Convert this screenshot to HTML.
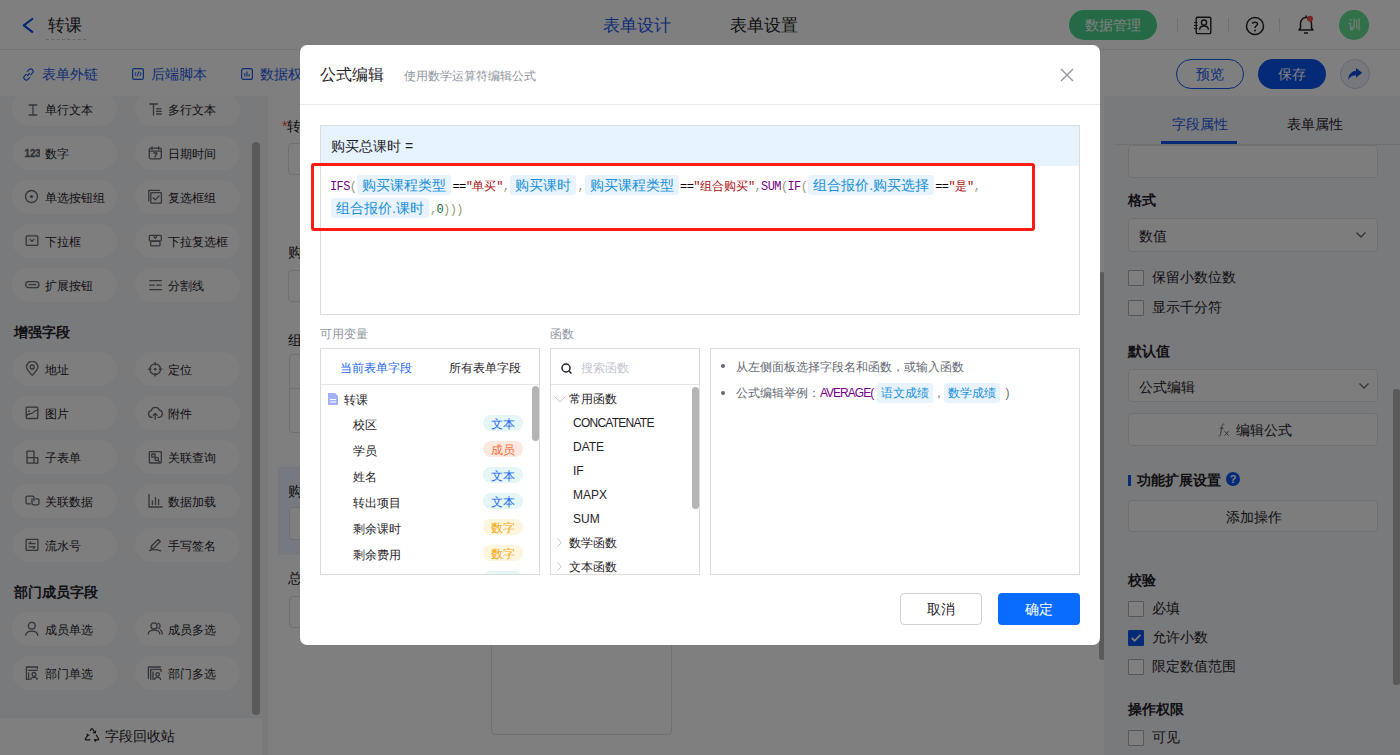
<!DOCTYPE html>
<html><head><meta charset="utf-8">
<style>
*{box-sizing:border-box;margin:0;padding:0}
html,body{width:1400px;height:755px;overflow:hidden;background:#fff;font-family:"Liberation Sans",sans-serif;color:#1f2329}
.a{position:absolute}
.t{position:absolute;white-space:nowrap;line-height:1}
#page{position:absolute;left:0;top:0;width:1400px;height:755px;background:#fff}
#mask{position:absolute;left:0;top:0;width:1400px;height:755px;background:rgba(0,0,0,.5)}
/* left panel */
#left{position:absolute;left:0;top:96px;width:268px;height:659px;background:#f3f4f8;overflow:hidden}
.pill{position:absolute;width:105px;height:34px;border-radius:17px;background:#fcfcfd}
.pill .ic{position:absolute;left:12px;top:9px;width:16px;height:16px}
.pill .lb{position:absolute;left:33px;top:12px;font-size:12px;line-height:12px;color:#1f2329;white-space:nowrap}
.sec{position:absolute;left:14px;font-size:14px;font-weight:bold;line-height:14px;color:#1f2329}
/* modal */
#modal{position:absolute;left:300px;top:45px;width:800px;height:600px;background:#fff;border-radius:7px}
.box{position:absolute;border:1px solid #dcdcdc;background:#fff}
.chip{display:inline-block;margin:0 1px;background:#e8f3fd;color:#1890d8;border-radius:3px;padding:0 5px;height:20px;line-height:20px;font-size:14px;font-family:"Liberation Sans",sans-serif;vertical-align:top}
.cm{font-family:"Liberation Mono",monospace;font-size:12px;letter-spacing:-0.6px}
.fl{position:absolute;height:20px;display:flex;align-items:baseline;white-space:nowrap}
.cj{font-size:12px}
.dchip{display:inline-block;background:#e8f3fd;color:#1890d8;padding:0 4px;border-radius:3px;height:20px;line-height:20px}
.kw{color:#708}.br{color:#997}.st{color:#a11}.nu{color:#164}.op{color:#000}
.tag{position:absolute;left:162px;width:40px;height:16px;border-radius:8px;font-size:12px;line-height:18px;text-align:center;overflow:hidden}
.vrow{position:absolute;left:32px;font-size:12px;line-height:12px;color:#1f2329}
.frow{position:absolute;font-size:12px;line-height:12px;color:#1f2329}
/* right panel */
#right{position:absolute;left:1104px;top:96px;width:296px;height:659px;background:#f3f4f8}
.inp{position:absolute;left:24px;width:250px;border:1px solid #dfe1e5;border-radius:4px;background:#fafafa}
.rlab{position:absolute;left:24px;font-size:14px;font-weight:bold;line-height:14px;color:#1f2329}
.cb{position:absolute;left:24px;width:16px;height:16px;border:1px solid #a9aeb8;border-radius:1px;background:#fff}
.cbl{position:absolute;left:48px;font-size:14px;line-height:14px;color:#1f2329}
</style></head><body>
<div id="page">
  <!-- top bar -->
  <div class="a" style="left:0;top:0;width:1400px;height:50px;background:#fff;border-bottom:1px solid #e8e9eb"></div>
  <svg class="a" style="left:20px;top:16px" width="16" height="18" viewBox="0 0 16 18"><path d="M12.2 3 L3.8 9.4 L12.2 15.8" fill="none" stroke="#0b4fe0" stroke-width="2.2" stroke-linecap="round" stroke-linejoin="round"/></svg>
  <div class="t" style="left:48px;top:17px;font-size:17px;color:#1f2329">转课</div>
  <div class="a" style="left:46px;top:39px;width:40px;border-top:1px dashed #c9cdd4"></div>
  <div class="t" style="left:603px;top:17px;font-size:16.5px;color:#1e5ae8">表单设计</div>
  <div class="t" style="left:730px;top:17px;font-size:16.5px;color:#1f2329">表单设置</div>
  <div class="a" style="left:1069px;top:10px;width:88px;height:30px;border-radius:15px;background:#4bd48f;color:#fff;font-size:14px;line-height:30px;text-align:center">数据管理</div>
  <div class="a" style="left:1177px;top:18px;width:1px;height:14px;background:#dee0e3"></div>
  <div class="a" style="left:1228px;top:18px;width:1px;height:14px;background:#dee0e3"></div>
  <div class="a" style="left:1279px;top:18px;width:1px;height:14px;background:#dee0e3"></div>
  <!-- contacts icon -->
  <svg class="a" style="left:1193px;top:16px" width="20" height="19" viewBox="0 0 20 19"><rect x="3.2" y="1.3" width="14.6" height="16.3" rx="1.2" fill="none" stroke="#1f2329" stroke-width="1.4"/><circle cx="11" cy="6.6" r="2.6" fill="none" stroke="#1f2329" stroke-width="1.4"/><path d="M6.6 13.8 C6.8 8.8 15.2 8.8 15.4 13.8" fill="none" stroke="#1f2329" stroke-width="1.4"/><path d="M1 6.5h3.5M1 9.5h3.5M1 12.5h3.5" stroke="#1f2329" stroke-width="1.1"/></svg>
  <!-- help icon -->
  <svg class="a" style="left:1245px;top:16px" width="20" height="20" viewBox="0 0 20 20"><circle cx="10" cy="10" r="8.5" fill="none" stroke="#1f2329" stroke-width="1.5"/><path d="M7.5 7.8 C7.5 5.8 12.5 5.5 12.5 8 C12.5 9.8 10 9.8 10 12" fill="none" stroke="#1f2329" stroke-width="1.5"/><circle cx="10" cy="14.5" r="1" fill="#1f2329"/></svg>
  <!-- bell -->
  <svg class="a" style="left:1296px;top:14px" width="20" height="21" viewBox="0 0 20 21"><path d="M3 16 L4.5 14 V9.5 C4.5 6 7 3.5 10 3.5 C13 3.5 15.5 6 15.5 9.5 V14 L17 16 Z" fill="none" stroke="#1f2329" stroke-width="1.5" stroke-linejoin="round"/><path d="M8 19h4" stroke="#1f2329" stroke-width="1.5"/><path d="M10 1.5v2" stroke="#1f2329" stroke-width="1.5"/><circle cx="14" cy="4.8" r="3" fill="#f54a45"/></svg>
  <div class="a" style="left:1339px;top:10px;width:30px;height:30px;border-radius:50%;background:#62e090;color:#fff;font-size:12.5px;line-height:31px;text-align:center">训</div>

  <!-- toolbar -->
  <div class="a" style="left:0;top:50px;width:1400px;height:46px;background:#fff"></div>
  <svg class="a" style="left:22px;top:68px" width="13" height="13" viewBox="0 0 13 13"><path d="M5.5 7.5 L7.5 5.5 M4.3 6.2 L2.6 7.9 A2.4 2.4 0 0 0 6 11.3 L7.7 9.6 M8.7 6.8 L10.4 5.1 A2.4 2.4 0 0 0 7 1.7 L5.3 3.4" fill="none" stroke="#1e5ae8" stroke-width="1.2" stroke-linecap="round"/></svg>
  <div class="t" style="left:42px;top:67px;font-size:14px;color:#1e5ae8">表单外链</div>
  <svg class="a" style="left:132px;top:68px" width="12" height="12" viewBox="0 0 12 12"><rect x=".6" y=".6" width="10.8" height="10.8" rx="1.5" fill="none" stroke="#1e5ae8" stroke-width="1.2"/><path d="M4.2 4 L2.8 6 L4.2 8 M7.8 4 L9.2 6 L7.8 8 M6.6 3.5 L5.4 8.5" fill="none" stroke="#1e5ae8" stroke-width="1"/></svg>
  <div class="t" style="left:151px;top:67px;font-size:14px;color:#1e5ae8">后端脚本</div>
  <svg class="a" style="left:241px;top:68px" width="12" height="12" viewBox="0 0 12 12"><rect x=".6" y=".6" width="10.8" height="10.8" rx="2" fill="none" stroke="#1e5ae8" stroke-width="1.2"/><path d="M3.8 5v3.5M6 3.5v5M8.2 6v2.5" stroke="#1e5ae8" stroke-width="1.1"/></svg>
  <div class="t" style="left:260px;top:67px;font-size:14px;color:#1e5ae8">数据权限</div>
  <div class="a" style="left:1176px;top:59px;width:68px;height:30px;border-radius:15px;border:1px solid #1458f0;color:#1458f0;font-size:14px;line-height:28px;text-align:center">预览</div>
  <div class="a" style="left:1258px;top:59px;width:68px;height:30px;border-radius:15px;background:#0b55f0;color:#fff;font-size:14px;line-height:30px;text-align:center">保存</div>
  <div class="a" style="left:1340px;top:59px;width:30px;height:30px;border-radius:50%;border:1px solid #c9d1e6;background:#eef1f8"></div>
  <svg class="a" style="left:1346px;top:65px" width="18" height="18" viewBox="0 0 18 18"><path d="M10 2.9 L16.2 7.8 L10 12.8 V10.2 C6.5 10.2 4 11.8 2.1 14.8 C2.4 9.8 5.5 6.2 10 5.8 Z" fill="#0b4fe0"/></svg>

  <!-- left panel -->
  <div id="left">
    <div class="pill" style="left:12px;top:-4px"><svg class="ic" width="16" height="16" viewBox="0 0 16 16"><path d="M5.2 4 H12.8 M9 4 V14 M5.2 14 H12.8" fill="none" stroke="#646a73" stroke-width="1.3" stroke-linecap="round" stroke-linejoin="round"/></svg><div class="lb">单行文本</div></div>
    <div class="pill" style="left:135px;top:-4px"><svg class="ic" width="16" height="16" viewBox="0 0 16 16"><path d="M2.6 3 H10.4 M6.5 3 V14.2 M9.6 7.8 H14.2 M9.6 10.4 H14.2 M9.6 13 H14.2" fill="none" stroke="#646a73" stroke-width="1.3" stroke-linecap="round" stroke-linejoin="round"/></svg><div class="lb">多行文本</div></div>
    <div class="pill" style="left:12px;top:40px"><svg class="ic" width="16" height="16" viewBox="0 0 16 16"><text x="0.6" y="12" font-family="Liberation Sans" font-weight="700" font-size="10" letter-spacing="-0.2" fill="#646a73" stroke="#646a73" stroke-width="0.35">123</text></svg><div class="lb">数字</div></div>
    <div class="pill" style="left:135px;top:40px"><svg class="ic" width="16" height="16" viewBox="0 0 16 16"><rect x="2.3" y="3.2" width="12" height="10.6" rx="1.5" fill="none" stroke="#646a73" stroke-width="1.3" stroke-linecap="round" stroke-linejoin="round"/><path d="M5 1.8 V4.4 M11.6 1.8 V4.4 M2.3 6.2 H14.3 M6.8 8 H10 L8 12" fill="none" stroke="#646a73" stroke-width="1.3" stroke-linecap="round" stroke-linejoin="round"/></svg><div class="lb">日期时间</div></div>
    <div class="pill" style="left:12px;top:84px"><svg class="ic" width="16" height="16" viewBox="0 0 16 16"><circle cx="7.5" cy="7.5" r="6" fill="none" stroke="#646a73" stroke-width="1.3" stroke-linecap="round" stroke-linejoin="round"/><circle cx="7.5" cy="7.5" r="1.6" fill="#646a73"/></svg><div class="lb">单选按钮组</div></div>
    <div class="pill" style="left:135px;top:84px"><svg class="ic" width="16" height="16" viewBox="0 0 16 16"><path d="M1.8 12 V1.4 H12.4" fill="none" stroke="#646a73" stroke-width="1.3" stroke-linecap="round" stroke-linejoin="round"/><rect x="3.8" y="3.6" width="10.6" height="10.6" rx="0.8" fill="none" stroke="#646a73" stroke-width="1.3" stroke-linecap="round" stroke-linejoin="round"/><path d="M6.2 8.8 L8.3 10.9 L12 7" fill="none" stroke="#646a73" stroke-width="1.3" stroke-linecap="round" stroke-linejoin="round"/></svg><div class="lb">复选框组</div></div>
    <div class="pill" style="left:12px;top:128px"><svg class="ic" width="16" height="16" viewBox="0 0 16 16"><rect x="2.2" y="2.8" width="11.6" height="9.6" rx="1" fill="none" stroke="#646a73" stroke-width="1.3" stroke-linecap="round" stroke-linejoin="round"/><path d="M6 6.4 L8 8.4 L10 6.4" fill="none" stroke="#646a73" stroke-width="1.3" stroke-linecap="round" stroke-linejoin="round"/></svg><div class="lb">下拉框</div></div>
    <div class="pill" style="left:135px;top:128px"><svg class="ic" width="16" height="16" viewBox="0 0 16 16"><rect x="2.3" y="2.3" width="12" height="5.6" rx="1" fill="none" stroke="#646a73" stroke-width="1.3" stroke-linecap="round" stroke-linejoin="round"/><rect x="3.6" y="8.3" width="9.4" height="4.6" rx="1" fill="none" stroke="#646a73" stroke-width="1.3" stroke-linecap="round" stroke-linejoin="round"/><path d="M7 3.8 L8.3 5.2 L9.6 3.8" fill="none" stroke="#646a73" stroke-width="1.3" stroke-linecap="round" stroke-linejoin="round"/></svg><div class="lb">下拉复选框</div></div>
    <div class="pill" style="left:12px;top:172px"><svg class="ic" width="16" height="16" viewBox="0 0 16 16"><rect x="1.7" y="4.7" width="13.3" height="6" rx="3" fill="none" stroke="#646a73" stroke-width="1.3" stroke-linecap="round" stroke-linejoin="round"/><path d="M5 7.7 H11.8" fill="none" stroke="#646a73" stroke-width="1.3" stroke-linecap="round" stroke-linejoin="round"/></svg><div class="lb">扩展按钮</div></div>
    <div class="pill" style="left:135px;top:172px"><svg class="ic" width="16" height="16" viewBox="0 0 16 16"><path d="M2.7 3.6 H14.4 M2.7 8.2 H7.3 M9.8 8.2 H14.4 M2.7 12.7 H14.4" fill="none" stroke="#646a73" stroke-width="1.3" stroke-linecap="round" stroke-linejoin="round"/></svg><div class="lb">分割线</div></div>
    <div class="pill" style="left:12px;top:256px"><svg class="ic" width="16" height="16" viewBox="0 0 16 16"><path d="M8.2 14.4 C4.6 10.6 2.5 8.2 2.5 6 A5.7 5.7 0 0 1 13.9 6 C13.9 8.2 11.8 10.6 8.2 14.4 Z" fill="none" stroke="#646a73" stroke-width="1.3" stroke-linecap="round" stroke-linejoin="round"/><circle cx="8.2" cy="6" r="2" fill="none" stroke="#646a73" stroke-width="1.3" stroke-linecap="round" stroke-linejoin="round"/></svg><div class="lb">地址</div></div>
    <div class="pill" style="left:135px;top:256px"><svg class="ic" width="16" height="16" viewBox="0 0 16 16"><circle cx="8.2" cy="8.2" r="5.3" fill="none" stroke="#646a73" stroke-width="1.3" stroke-linecap="round" stroke-linejoin="round"/><path d="M8.2 1.4 V4 M8.2 12.4 V15 M1.4 8.2 H4 M12.4 8.2 H15" fill="none" stroke="#646a73" stroke-width="1.3" stroke-linecap="round" stroke-linejoin="round"/><circle cx="8.2" cy="8.2" r="1.3" fill="#646a73"/></svg><div class="lb">定位</div></div>
    <div class="pill" style="left:12px;top:300px"><svg class="ic" width="16" height="16" viewBox="0 0 16 16"><rect x="2.2" y="2.1" width="11.6" height="11.4" rx="1" fill="none" stroke="#646a73" stroke-width="1.3" stroke-linecap="round" stroke-linejoin="round"/><path d="M2.6 10.6 C4.5 7.8 7 9.6 9 7.6 C10.5 6 11.5 5.2 13.6 5.2" fill="none" stroke="#646a73" stroke-width="1.3" stroke-linecap="round" stroke-linejoin="round"/><circle cx="5" cy="6.2" r="0.9" fill="#646a73"/></svg><div class="lb">图片</div></div>
    <div class="pill" style="left:135px;top:300px"><svg class="ic" width="16" height="16" viewBox="0 0 16 16"><path d="M5.3 12.3 H4.6 A3.4 3.4 0 0 1 4.2 5.6 A4.4 4.4 0 0 1 12.5 5.2 A3.6 3.6 0 0 1 12 12.3 H11 M8.2 14.2 V8.4 M6.3 10.3 L8.2 8.4 L10.1 10.3" fill="none" stroke="#646a73" stroke-width="1.3" stroke-linecap="round" stroke-linejoin="round"/></svg><div class="lb">附件</div></div>
    <div class="pill" style="left:12px;top:344px"><svg class="ic" width="16" height="16" viewBox="0 0 16 16"><path d="M3 2.2 H10 V14.2 H3 Z M3 8.6 H13.8 V14.2 H10" fill="none" stroke="#646a73" stroke-width="1.3" stroke-linecap="round" stroke-linejoin="round"/></svg><div class="lb">子表单</div></div>
    <div class="pill" style="left:135px;top:344px"><svg class="ic" width="16" height="16" viewBox="0 0 16 16"><rect x="2.3" y="2.6" width="12" height="11.4" rx="0.8" fill="none" stroke="#646a73" stroke-width="1.3" stroke-linecap="round" stroke-linejoin="round"/><rect x="4.8" y="5" width="3.2" height="3.2" fill="none" stroke="#646a73" stroke-width="1.3" stroke-linecap="round" stroke-linejoin="round"/><circle cx="9.8" cy="10" r="1.7" fill="none" stroke="#646a73" stroke-width="1.3" stroke-linecap="round" stroke-linejoin="round"/><path d="M11 11.2 L12.4 12.6" fill="none" stroke="#646a73" stroke-width="1.3" stroke-linecap="round" stroke-linejoin="round"/></svg><div class="lb">关联查询</div></div>
    <div class="pill" style="left:12px;top:388px"><svg class="ic" width="16" height="16" viewBox="0 0 16 16"><path d="M6.6 10.8 H3.5 A1.5 1.5 0 0 1 2 9.3 V4.6 A1.5 1.5 0 0 1 3.5 3.1 H8.4 A1.5 1.5 0 0 1 9.9 4.6 V7.6" fill="none" stroke="#646a73" stroke-width="1.3" stroke-linecap="round" stroke-linejoin="round"/><path d="M8 5.8 V10.3 A1.5 1.5 0 0 0 9.5 11.8 H13.5 A1.5 1.5 0 0 0 15 10.3 V7.3 A1.5 1.5 0 0 0 13.5 5.8 H11.5" fill="none" stroke="#646a73" stroke-width="1.3" stroke-linecap="round" stroke-linejoin="round"/></svg><div class="lb">关联数据</div></div>
    <div class="pill" style="left:135px;top:388px"><svg class="ic" width="16" height="16" viewBox="0 0 16 16"><path d="M2 1.5 V14 H15.3 M5.4 8 V11.5 M8.5 4.5 V11.5 M11.6 6.5 V11.5" fill="none" stroke="#646a73" stroke-width="1.3" stroke-linecap="round" stroke-linejoin="round"/></svg><div class="lb">数据加载</div></div>
    <div class="pill" style="left:12px;top:432px"><svg class="ic" width="16" height="16" viewBox="0 0 16 16"><rect x="2.1" y="2.4" width="11.8" height="11" rx="0.6" fill="none" stroke="#646a73" stroke-width="1.3" stroke-linecap="round" stroke-linejoin="round"/><path d="M11 6.6 H5 L6.6 5 M5 9.8 H11 L9.4 11.4" fill="none" stroke="#646a73" stroke-width="1.3" stroke-linecap="round" stroke-linejoin="round"/></svg><div class="lb">流水号</div></div>
    <div class="pill" style="left:135px;top:432px"><svg class="ic" width="16" height="16" viewBox="0 0 16 16"><path d="M4 11.5 L4.6 9 L11.2 2.4 L13.3 4.5 L6.7 11.1 Z" fill="none" stroke="#646a73" stroke-width="1.3" stroke-linecap="round" stroke-linejoin="round"/><path d="M2.4 13.6 C5.5 12.4 9 12.3 13.7 13.8" fill="none" stroke="#646a73" stroke-width="1.3" stroke-linecap="round" stroke-linejoin="round"/></svg><div class="lb">手写签名</div></div>
    <div class="pill" style="left:12px;top:516px"><svg class="ic" width="16" height="16" viewBox="0 0 16 16"><circle cx="7.8" cy="4.8" r="3.4" fill="none" stroke="#646a73" stroke-width="1.3" stroke-linecap="round" stroke-linejoin="round"/><path d="M1.8 14.4 C2.2 8.6 13.4 8.6 13.8 14.4" fill="none" stroke="#646a73" stroke-width="1.3" stroke-linecap="round" stroke-linejoin="round"/></svg><div class="lb">成员单选</div></div>
    <div class="pill" style="left:135px;top:516px"><svg class="ic" width="16" height="16" viewBox="0 0 16 16"><circle cx="7" cy="4.9" r="3.1" fill="none" stroke="#646a73" stroke-width="1.3" stroke-linecap="round" stroke-linejoin="round"/><path d="M1.2 13 C1.5 7.8 12.5 7.8 12.8 13 M11.2 2.2 A3 3 0 0 1 11.4 7.7 M13.4 8.7 C14.6 9.6 15.2 11 15.3 13" fill="none" stroke="#646a73" stroke-width="1.3" stroke-linecap="round" stroke-linejoin="round"/></svg><div class="lb">成员多选</div></div>
    <div class="pill" style="left:12px;top:560px"><svg class="ic" width="16" height="16" viewBox="0 0 16 16"><path d="M13.4 3.4 V2 H2.4 V14.4 H5.2 M4.6 5.4 H13.4 M4.6 8 V14.4" fill="none" stroke="#646a73" stroke-width="1.3" stroke-linecap="round" stroke-linejoin="round"/><circle cx="10" cy="9.4" r="1.9" fill="none" stroke="#646a73" stroke-width="1.3" stroke-linecap="round" stroke-linejoin="round"/><path d="M6.8 14.4 C7 11.6 13 11.6 13.2 14.4" fill="none" stroke="#646a73" stroke-width="1.3" stroke-linecap="round" stroke-linejoin="round"/></svg><div class="lb">部门单选</div></div>
    <div class="pill" style="left:135px;top:560px"><svg class="ic" width="16" height="16" viewBox="0 0 16 16"><path d="M13.4 2 H1.4 V13.5 M3.7 4.3 H14 V6.5 M3.7 4.3 V14.4 M6 6.8 V14.4" fill="none" stroke="#646a73" stroke-width="1.3" stroke-linecap="round" stroke-linejoin="round"/><circle cx="10.6" cy="9.4" r="1.8" fill="none" stroke="#646a73" stroke-width="1.3" stroke-linecap="round" stroke-linejoin="round"/><path d="M7.6 14.4 C7.8 11.8 13.4 11.8 13.6 14.4" fill="none" stroke="#646a73" stroke-width="1.3" stroke-linecap="round" stroke-linejoin="round"/></svg><div class="lb">部门多选</div></div>
    <div class="sec" style="top:229px">增强字段</div>
    <div class="sec" style="top:489px">部门成员字段</div>
    <div class="a" style="left:252px;top:46px;width:8px;height:573px;border-radius:4px;background:#b5b5b5"></div>
    <div class="a" style="left:0;top:621px;width:262px;height:38px;background:#fff;border-top:1px solid #eceef1"></div>
    <svg class="a" style="left:84px;top:632px" width="16" height="14" viewBox="0 0 16 14"><path d="M6.2 2.6 L7.4 1 Q8 0.3 8.6 1 L10.6 4.3 M12.3 7.2 L14.5 10.8 Q14.9 11.8 13.8 11.8 L10.5 11.8 M6 11.8 L2.2 11.8 Q1.1 11.8 1.5 10.8 L3.6 7.4" fill="none" stroke="#1f2329" stroke-width="1.2" stroke-linecap="round" stroke-linejoin="round"/><path d="M9.4 4.6 L11.2 5 L11.6 3.2 M12 11.8 L10.5 11.8 L11.4 13.2 M3 6.2 L3.6 7.6 L5 7" fill="none" stroke="#1f2329" stroke-width="1.2" stroke-linecap="round" stroke-linejoin="round"/></svg>
    <div class="t" style="left:105px;top:633px;font-size:14px;color:#1f2329">字段回收站</div>
  </div>

  <!-- canvas -->
  <div class="a" style="left:268px;top:96px;width:842px;height:659px;background:#fff"></div>
  <div class="t" style="left:282px;top:119px;font-size:14px;color:#1f2329"><span style="color:#f54a45">*</span>转课</div>
  <div class="a" style="left:288px;top:143px;width:400px;height:32px;border:1px solid #dee0e3;border-radius:4px"></div>
  <div class="t" style="left:288px;top:245px;font-size:14px">购</div>
  <div class="a" style="left:288px;top:270px;width:400px;height:32px;border:1px solid #dee0e3;border-radius:4px"></div>
  <div class="t" style="left:288px;top:333px;font-size:14px">组</div>
  <div class="a" style="left:289px;top:354px;width:400px;height:79px;border:1px solid #dee0e3;border-radius:4px"></div>
  <div class="a" style="left:289px;top:388px;width:400px;height:1px;background:#dee0e3"></div>
  <div class="a" style="left:278px;top:467px;width:500px;height:88px;background:#edf3fe"></div>
  <div class="t" style="left:288px;top:484px;font-size:14px">购</div>
  <div class="a" style="left:289px;top:507px;width:400px;height:33px;border:1px solid #dee0e3;border-radius:4px;background:#fff"></div>
  <div class="t" style="left:288px;top:571px;font-size:14px">总</div>
  <div class="a" style="left:289px;top:596px;width:400px;height:32px;border:1px solid #dee0e3;border-radius:4px"></div>
  <div class="a" style="left:491px;top:620px;width:181px;height:115px;border:1px solid #dee0e3;border-radius:4px"></div>
  <div class="a" style="left:1099px;top:272px;width:6px;height:388px;border-radius:3px;background:#b5b5b5"></div>

  <!-- right panel -->
  <div id="right">
    <div class="t" style="left:68px;top:21px;font-size:14px;color:#1e5ae8">字段属性</div>
    <div class="t" style="left:183px;top:21px;font-size:14px;color:#1f2329">表单属性</div>
    <div class="a" style="left:10px;top:48px;width:286px;height:1px;background:#dee0e3"></div>
    <div class="a" style="left:57px;top:45px;width:76px;height:3px;background:#0b55f0"></div>
    <div class="inp" style="top:49px;height:33px"></div>
    <div class="rlab" style="top:97px">格式</div>
    <div class="inp" style="top:122px;height:34px"><div class="t" style="left:10px;top:10px;font-size:14px">数值</div>
      <svg class="a" style="left:226px;top:12px" width="12" height="8" viewBox="0 0 12 8"><path d="M1.5 1.5 L6 6 L10.5 1.5" fill="none" stroke="#646a73" stroke-width="1.3"/></svg></div>
    <div class="cb" style="top:174px"></div><div class="cbl" style="top:174px">保留小数位数</div>
    <div class="cb" style="top:204px"></div><div class="cbl" style="top:204px">显示千分符</div>
    <div class="rlab" style="top:248px">默认值</div>
    <div class="inp" style="top:273px;height:33px"><div class="t" style="left:10px;top:10px;font-size:14px">公式编辑</div>
      <svg class="a" style="left:229px;top:12px" width="12" height="8" viewBox="0 0 12 8"><path d="M1.5 1.5 L6 6 L10.5 1.5" fill="none" stroke="#646a73" stroke-width="1.3"/></svg></div>
    <div class="inp" style="top:317px;height:33px"><svg class="a" style="left:89px;top:9px" width="12" height="14" viewBox="0 0 12 14"><path d="M6.5 1.2 C5 0.6 4.2 1.6 3.9 3.5 L2.5 11.5 C2.2 13 1.3 13.3 0.6 12.8 M1.8 5.2 H5.6" fill="none" stroke="#646a73" stroke-width="1"/><path d="M6.6 8.2 L10.6 12.6 M10.6 8.2 L6.6 12.6" stroke="#646a73" stroke-width="1"/></svg><div class="t" style="left:107px;top:9px;font-size:14px">编辑公式</div></div>
    <div class="a" style="left:24px;top:379px;width:3px;height:11px;background:#0b55f0"></div>
    <div class="rlab" style="top:377px;left:33px">功能扩展设置</div>
    <div class="a" style="left:122px;top:376px;width:14px;height:14px;border-radius:50%;background:#0b55f0;color:#fff;font-size:11px;font-weight:bold;line-height:14px;text-align:center">?</div>
    <div class="inp" style="top:404px;height:32px"><div class="t" style="left:97px;top:9px;font-size:14px">添加操作</div></div>
    <div class="rlab" style="top:477px">校验</div>
    <div class="cb" style="top:505px"></div><div class="cbl" style="top:505px">必填</div>
    <div class="cb" style="top:534px;background:#0b55f0;border-color:#0b55f0"><svg class="a" style="left:0px;top:0px" width="14" height="14" viewBox="0 0 14 14"><path d="M2.8 7 L5.6 9.8 L11.4 3.8" fill="none" stroke="#fff" stroke-width="1.8"/></svg></div><div class="cbl" style="top:534px">允许小数</div>
    <div class="cb" style="top:563px"></div><div class="cbl" style="top:563px">限定数值范围</div>
    <div class="rlab" style="top:606px">操作权限</div>
    <div class="cb" style="top:634px"></div><div class="cbl" style="top:634px">可见</div>
    <div class="a" style="left:289px;top:293px;width:7px;height:296px;border-radius:3px;background:#b5b5b5"></div>
  </div>
</div>
<div id="mask"></div>

<div id="modal">
  <div class="t" style="left:20px;top:22px;font-size:16px;color:#1f2329">公式编辑</div>
  <div class="t" style="left:104px;top:25px;font-size:12px;color:#8f959e">使用数学运算符编辑公式</div>
  <svg class="a" style="left:760px;top:23px" width="14" height="14" viewBox="0 0 14 14"><path d="M1 1 L13 13 M13 1 L1 13" stroke="#8f959e" stroke-width="1.4"/></svg>
  <div class="a" style="left:0;top:59px;width:800px;height:1px;background:#e8e9eb"></div>

  <!-- editor -->
  <div class="box" style="left:20px;top:80px;width:760px;height:190px"></div>
  <div class="a" style="left:21px;top:81px;width:758px;height:40px;background:#e6f3fd"></div>
  <div class="t" style="left:31px;top:94px;font-size:14px;color:#1f2329">购买总课时 =</div>
  <div class="fl" style="left:30px;top:130px"><span class="cm kw">IFS</span><span class="cm br">(</span><span class="chip">购买课程类型</span><span class="cm op">==</span><span class="cm st">"</span><span class="st cj">单买</span><span class="cm st">"</span><span class="cm br">,</span><span class="chip">购买课时</span><span class="cm br">,</span><span class="chip">购买课程类型</span><span class="cm op">==</span><span class="cm st">"</span><span class="st cj">组合购买</span><span class="cm st">"</span><span class="cm br">,</span><span class="cm kw">SUM</span><span class="cm br">(</span><span class="cm kw">IF</span><span class="cm br">(</span><span class="chip">组合报价.购买选择</span><span class="cm op">==</span><span class="cm st">"</span><span class="st cj">是</span><span class="cm st">"</span><span class="cm br">,</span></div>
  <div class="fl" style="left:30px;top:152.5px"><span class="chip">组合报价.课时</span><span class="cm br">,</span><span class="cm nu">0</span><span class="cm br">)))</span></div>
  <div class="a" style="left:11px;top:118px;width:724px;height:68px;border:3px solid #fc1b12;border-radius:3px"></div>

  <div class="t" style="left:20px;top:283px;font-size:12px;color:#8f959e">可用变量</div>
  <div class="t" style="left:250px;top:283px;font-size:12px;color:#8f959e">函数</div>

  <!-- variables -->
  <div class="box" style="left:20px;top:303px;width:220px;height:227px;overflow:hidden">
    <div class="t" style="left:19px;top:13px;font-size:12px;color:#2468f2">当前表单字段</div>
    <div class="t" style="left:128px;top:13px;font-size:12px;color:#1f2329">所有表单字段</div>
    <div class="a" style="left:0;top:35px;width:220px;height:1px;background:#e4e6ea"></div>
    <svg class="a" style="left:7px;top:44px" width="11" height="12" viewBox="0 0 11 12"><path d="M0 0 H7 L10 3 V12 H0 Z" fill="#a3b1f7"/><path d="M2 6.5h6M2 9h6" stroke="#fff" stroke-width="1"/></svg>
    <div class="t" style="left:23px;top:45px;font-size:12px">转课</div>
    <div class="vrow" style="top:70px">校区</div><div class="tag" style="top:66px;background:#e5f6f6;color:#2468f2">文本</div>
    <div class="vrow" style="top:96px">学员</div><div class="tag" style="top:92px;background:#fde8df;color:#f0703a">成员</div>
    <div class="vrow" style="top:122px">姓名</div><div class="tag" style="top:118px;background:#e5f6f6;color:#2468f2">文本</div>
    <div class="vrow" style="top:148px">转出项目</div><div class="tag" style="top:144px;background:#e5f6f6;color:#2468f2">文本</div>
    <div class="vrow" style="top:174px">剩余课时</div><div class="tag" style="top:170px;background:#fef5df;color:#f2a60e">数字</div>
    <div class="vrow" style="top:200px">剩余费用</div><div class="tag" style="top:196px;background:#fef5df;color:#f2a60e">数字</div>
    <div class="tag" style="top:222px;background:#e5f6f6"></div>
    <div class="a" style="left:211px;top:37px;width:7px;height:55px;border-radius:4px;background:#b4b4b4"></div>
  </div>

  <!-- functions -->
  <div class="box" style="left:250px;top:303px;width:150px;height:227px;overflow:hidden">
    <svg class="a" style="left:10px;top:14px" width="12" height="11" viewBox="0 0 12 11"><circle cx="5" cy="5" r="4" fill="none" stroke="#1f2329" stroke-width="1.5"/><path d="M8 8 L10.5 10.5" stroke="#1f2329" stroke-width="1.5"/></svg>
    <div class="t" style="left:30px;top:13px;font-size:12px;color:#c3c7ce">搜索函数</div>
    <div class="a" style="left:0;top:35px;width:150px;height:1px;background:#e4e6ea"></div>
    <svg class="a" style="left:3px;top:47px" width="12" height="7" viewBox="0 0 12 7"><path d="M.5 .5 L6 6 L11.5 .5" fill="none" stroke="#c3c7ce" stroke-width="1"/></svg>
    <div class="frow" style="left:18px;top:44px">常用函数</div>
    <div class="frow" style="left:22px;top:68px;letter-spacing:-0.75px">CONCATENATE</div>
    <div class="frow" style="left:22px;top:92px">DATE</div>
    <div class="frow" style="left:22px;top:116px">IF</div>
    <div class="frow" style="left:22px;top:140px">MAPX</div>
    <div class="frow" style="left:22px;top:164px">SUM</div>
    <svg class="a" style="left:6px;top:189px" width="5" height="9" viewBox="0 0 5 9"><path d="M.5 .5 L4.5 4.5 L.5 8.5" fill="none" stroke="#c3c7ce" stroke-width="1"/></svg>
    <div class="frow" style="left:18px;top:188px">数学函数</div>
    <svg class="a" style="left:6px;top:213px" width="5" height="9" viewBox="0 0 5 9"><path d="M.5 .5 L4.5 4.5 L.5 8.5" fill="none" stroke="#c3c7ce" stroke-width="1"/></svg>
    <div class="frow" style="left:18px;top:212px">文本函数</div>
    <div class="a" style="left:141px;top:38px;width:7px;height:122px;border-radius:4px;background:#b4b4b4"></div>
  </div>

  <!-- description -->
  <div class="box" style="left:410px;top:303px;width:370px;height:227px">
    <div class="a" style="left:10px;top:15px;width:4px;height:4px;border-radius:50%;background:#646a73"></div>
    <div class="t" style="left:25px;top:12px;font-size:12px;color:#646a73">从左侧面板选择字段名和函数，或输入函数</div>
    <div class="a" style="left:10px;top:42px;width:4px;height:4px;border-radius:50%;background:#646a73"></div>
    <div class="fl" style="left:25px;top:34px;font-size:12px;color:#646a73">公式编辑举例：<span style="color:#708;letter-spacing:-1px">AVERAGE(</span><span class="dchip" style="margin-left:4px">语文成绩</span><span style="margin:0 4px">,</span><span class="dchip">数学成绩</span><span style="margin-left:5px">)</span></div>
  </div>

  <div class="a" style="left:600px;top:548px;width:82px;height:32px;border:1px solid #d0d3d6;border-radius:4px;font-size:14px;line-height:30px;text-align:center;color:#1f2329">取消</div>
  <div class="a" style="left:698px;top:548px;width:82px;height:32px;border-radius:4px;background:#0a6cff;font-size:14px;line-height:32px;text-align:center;color:#fff">确定</div>
</div>
</body></html>
